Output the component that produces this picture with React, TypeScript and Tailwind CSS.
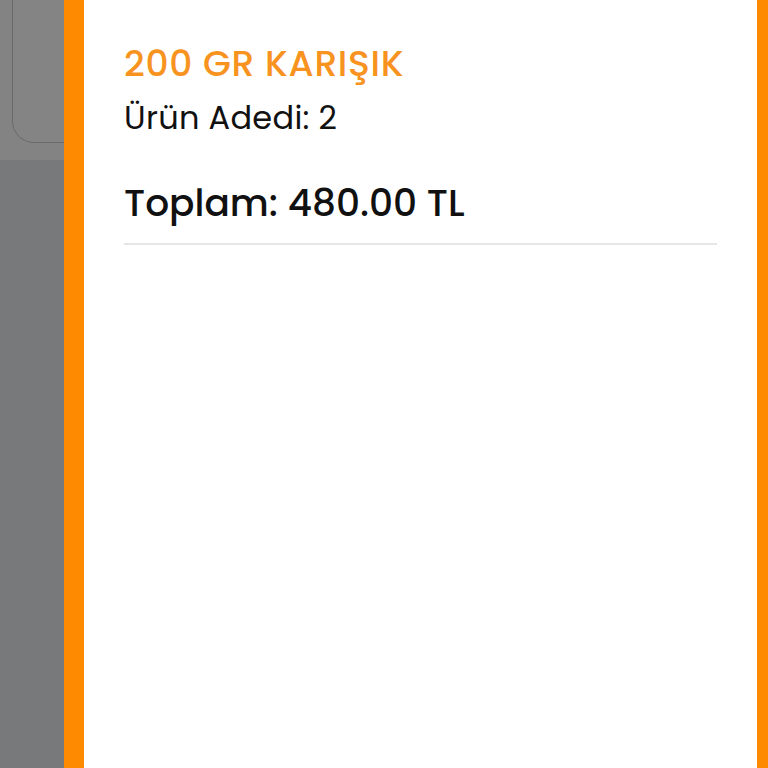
import React from "react";

export default function App() {
  return (
    <div className="flex h-[768px] w-[768px] overflow-hidden bg-[#78797a]" style={{ fontFamily: "Poppins, 'Open Sans', 'Liberation Sans', sans-serif" }}>
      <div className="flex w-[64px] shrink-0 flex-col overflow-hidden">
        <div className="h-[160px] w-[64px] overflow-hidden bg-[#838383]">
          <div className="ml-[12px] -mt-[20px] h-[163px] w-[120px] rounded-bl-[22px] border border-[#6a6a6a] bg-[#848484]"></div>
        </div>
        <div className="flex-1 bg-[#78797a]"></div>
      </div>
      <div className="flex h-full w-[704px] shrink-0 border-l-[20px] border-r-[11px] border-[#fd8a00] bg-white">
        <div className="flex w-full flex-col px-[40px] pt-[40px]">
          <div className="text-[36px] font-medium leading-[48px] tracking-[0.7px] text-[#f7931e]">200 GR KARIŞIK</div>
          <div className="mt-[8px] text-[32px] leading-[44px] tracking-[0.3px] text-[#111]">Ürün Adedi: 2</div>
          <div className="mt-[37px] text-[37.5px] font-medium leading-[52px] text-[#111]">Toplam: 480.00 TL</div>
          <div className="mt-[14px] h-[2px] w-full bg-[#e6e6e6]"></div>
        </div>
      </div>
    </div>
  );
}
